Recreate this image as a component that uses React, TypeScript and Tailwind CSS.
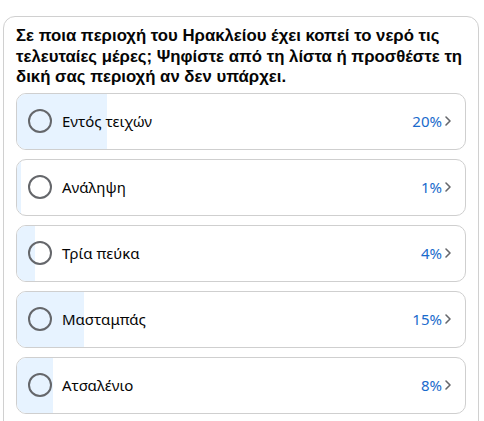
import React from "react";

const options = [
  { label: "Εντός τειχών", pct: 20 },
  { label: "Ανάληψη", pct: 1 },
  { label: "Τρία πεύκα", pct: 4 },
  { label: "Μασταμπάς", pct: 15 },
  { label: "Ατσαλένιο", pct: 8 },
];

export default function App() {
  return (
    <div className="w-[484px] h-[421px] overflow-hidden bg-white pt-4 pl-[3px]" style={{ fontFamily: '"Noto Sans", "Open Sans", sans-serif' }}>
      <div className="w-[476px] h-[500px] border border-[#d0d0d0] rounded-xl px-3 pt-[9px]">
        <div className="text-[16.75px] leading-[20.5px] font-bold text-[#050505]" style={{ fontFamily: '"Liberation Sans", Arial, sans-serif' }}>
          Σε ποια περιοχή του Ηρακλείου έχει κοπεί το νερό τις τελευταίες μέρες; Ψηφίστε από τη λίστα ή προσθέστε τη δική σας περιοχή αν δεν υπάρχει.
        </div>
        <div className="mt-[5px] flex flex-col gap-[9px]">
          {options.map((o) => (
            <div key={o.label} className="relative h-[57px] rounded-[10px] border border-[#cfcfcf] overflow-hidden bg-white">
              <div className="absolute left-0 top-0 bottom-0 bg-[#e7f3ff]" style={{ width: `${o.pct}%` }} />
              <div className="relative h-full flex items-center pl-[11px] pr-[12px]">
                <div className="w-[24px] h-[24px] rounded-full border-2 border-[#65676b]" />
                <div className="ml-[10px] text-[15px] text-[#050505] flex-1">{o.label}</div>
                <div className="text-[15px] text-[#1a6bcc]">{o.pct}%</div>
                <svg width="10" height="14" viewBox="0 0 10 14" className="ml-[1px]">
                  <path d="M3 3 L7 7 L3 11" fill="none" stroke="#65676b" strokeWidth="1.6" strokeLinecap="round" strokeLinejoin="round" />
                </svg>
              </div>
            </div>
          ))}
        </div>
      </div>
    </div>
  );
}
